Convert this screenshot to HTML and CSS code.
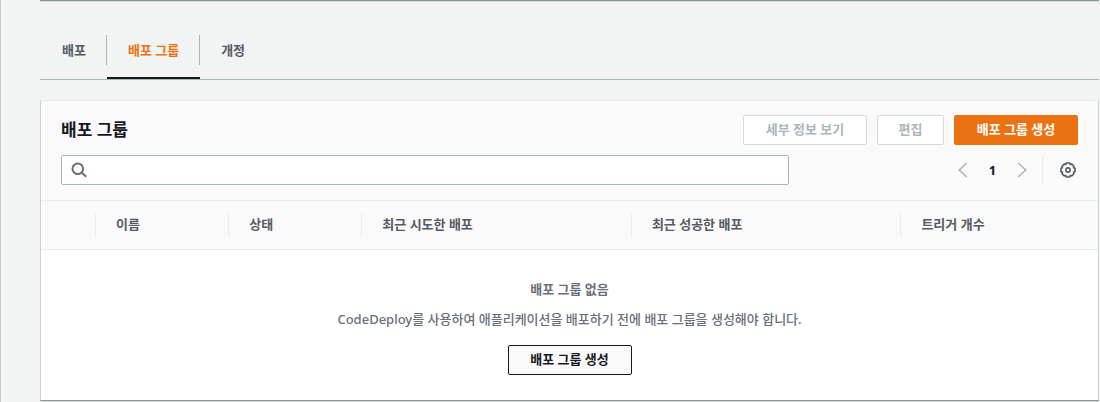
FILE: index.html
```html
<!DOCTYPE html>
<html lang="ko">
<head>
<meta charset="utf-8">
<title>배포 그룹</title>
<link rel="stylesheet" href="styles.css">
</head>
<body>
<main class="page">
  <div class="previous-panel"></div>
  <nav class="tabs">
    <a class="tab" href="#deployments"><span class="tab-label">배포</span></a>
    <a class="tab tab-active" href="#groups" aria-current="page"><span class="tab-label">배포 그룹</span></a>
    <a class="tab" href="#revisions"><span class="tab-label">개정</span></a>
  </nav>
  <section class="panel">
    <header class="panel-header">
      <div class="title-row">
        <h2 class="title">배포 그룹</h2>
        <div class="actions">
          <button class="button button-wide" type="button" disabled>세부 정보 보기</button>
          <button class="button" type="button" disabled>편집</button>
          <button class="button button-wide button-primary" type="button">배포 그룹 생성</button>
        </div>
      </div>
      <div class="filter-row">
        <label class="search">
          <svg class="search-icon" viewBox="0 0 16 16" aria-hidden="true"><circle cx="6.8" cy="6.8" r="5.3"/><path d="M10.6 10.6l4.5 4.2"/></svg>
          <input class="search-input" type="text" aria-label="배포 그룹 검색">
        </label>
        <div class="tools">
          <button class="icon-button" type="button" aria-label="이전 페이지"><svg class="chevron" viewBox="0 0 10 16"><path d="M8.8 1L1.2 8l7.6 7"/></svg></button>
          <button class="page-number" type="button">1</button>
          <button class="icon-button" type="button" aria-label="다음 페이지"><svg class="chevron" viewBox="0 0 10 16"><path d="M1.2 1l7.6 7-7.6 7"/></svg></button>
          <div class="settings">
            <button class="icon-button" type="button" aria-label="설정"><svg class="gear" viewBox="0 0 16 16"><path d="M6.3 1h3.4l.5 1.5 1.6-.4 2.1 2.1-.4 1.6 1.5.5v3.4l-1.5.5.4 1.6-2.1 2.1-1.6-.4-.5 1.5H6.3l-.5-1.5-1.6.4-2.1-2.1.4-1.6L1 9.7V6.3l1.5-.5-.4-1.6 2.1-2.1 1.6.4z"/><circle cx="8" cy="8" r="2.1"/></svg></button>
          </div>
        </div>
      </div>
    </header>
    <table class="table">
      <colgroup><col class="col-select"><col class="col-short"><col class="col-short"><col class="col-long"><col class="col-long"><col></colgroup>
      <thead>
        <tr>
          <th><div class="heading"></div></th>
          <th><div class="heading">이름</div></th>
          <th><div class="heading">상태</div></th>
          <th><div class="heading">최근 시도한 배포</div></th>
          <th><div class="heading">최근 성공한 배포</div></th>
          <th><div class="heading">트리거 개수</div></th>
        </tr>
      </thead>
      <tbody>
        <tr>
          <td colspan="6">
            <div class="empty">
              <strong>배포 그룹 없음</strong>
              <p class="empty-text">CodeDeploy를 사용하여 애플리케이션을 배포하기 전에 배포 그룹을 생성해야 합니다.</p>
              <button class="button button-wide button-outline" type="button">배포 그룹 생성</button>
            </div>
          </td>
        </tr>
      </tbody>
    </table>
  </section>
</main>
</body>
</html>
```
FILE: styles.css
```css
* { box-sizing: border-box; }

body {
  margin: 0;
  background: #f2f3f3;
  color: #16191f;
  font-family: "Noto Sans", "Noto Sans CJK KR", sans-serif;
  font-size: 13px;
  line-height: 20px;
}

button, input { font: inherit; }

.page {
  min-height: 100vh;
  padding: 0 1px 0 39px;
  border-left: 1px solid #c5cbce;
}

.previous-panel {
  border-bottom: 1px solid #879596;
  box-shadow: 0 1px 0 #d5dadb;
}

.tabs {
  display: flex;
  height: 79px;
  padding-top: 22px;
  border-bottom: 1px solid #aab7b8;
}

.tab {
  display: flex;
  align-items: center;
  border-bottom: 2px solid transparent;
  color: #545b64;
  font-weight: 700;
  text-decoration: none;
}

.tab-label {
  padding: 5px 20px 5px 21px;
  border-right: 1px solid #aab7b8;
}

.tab:first-child .tab-label { padding-left: 22px; }
.tab:last-child .tab-label { border-right-color: transparent; }
.tab-active { border-bottom-color: #16191f; color: #ec7211; }

.panel {
  margin-top: 20px;
  background: #fff;
  border: 1px solid #ccd1d3;
  border-top-color: #eaeded;
  border-bottom-color: #879596;
  box-shadow: 0 1px 0 #d5dadb;
}

.panel-header {
  display: flex;
  flex-direction: column;
  gap: 10px;
  padding: 14px 20px 15px;
  background: #fafafa;
  border-bottom: 1px solid #eaeded;
}

.title-row, .filter-row {
  display: flex;
  align-items: center;
  justify-content: space-between;
}

.title { margin: 0; font-size: 17px; line-height: 30px; }
.actions { display: flex; gap: 10px; }

.button {
  height: 30px;
  min-width: 67px;
  padding: 0 20px 2px;
  border: 1px solid #d5dbdb;
  border-radius: 2px;
  background: #fff;
  color: #16191f;
  font-weight: 700;
}

.button:disabled { color: #aab7b8; }
.button-wide { min-width: 124px; }
.button-primary { border-color: #ec7211; background: #ec7211; color: #fff; }
.button-outline { border-color: #16191f; background: #fafafa; }

.search {
  display: flex;
  align-items: center;
  width: 72%;
  max-width: 728px;
  height: 30px;
  padding: 0 9px;
  gap: 8px;
  border: 1px solid #aab7b8;
  border-radius: 2px;
  background: #fff;
}

.search-input { flex: 1; min-width: 0; padding: 0; border: 0; outline: 0; background: none; }

svg { display: block; fill: none; }
.search-icon { width: 16px; height: 16px; stroke: #687078; stroke-width: 2; }
.chevron { width: 10px; height: 16px; stroke: #aab7b8; stroke-width: 1.6; }
.gear { width: 16px; height: 16px; stroke: #545b64; stroke-width: 1.6; stroke-linejoin: round; }

.tools { display: flex; align-items: center; }
.icon-button { padding: 0; border: 0; background: none; }
.page-number { width: 49px; padding: 0; border: 0; background: none; color: #16191f; font-weight: 700; }

.settings {
  display: flex;
  align-items: center;
  height: 30px;
  margin-left: 15px;
  padding: 0 2px 0 17px;
  border-left: 1px solid #eaeded;
}

.table { width: 100%; table-layout: fixed; border-collapse: collapse; }
.col-select { width: 55px; }
.col-short { width: 12.6%; }
.col-long { width: 25.5%; }

.table th {
  padding: 12px 0;
  background: #fafafa;
  border-bottom: 1px solid #eaeded;
  color: #545b64;
  text-align: left;
}

.table td { padding: 0; }

.heading { height: 24px; padding: 1px 20px; border-right: 1px solid #eaeded; }
.table th:last-child .heading { border-right: 0; }

.empty {
  display: flex;
  flex-direction: column;
  align-items: center;
  padding: 29px 20px 25px;
  color: #687078;
}

.empty-text { margin: 10px 0 16px; font-weight: 500; }
```
